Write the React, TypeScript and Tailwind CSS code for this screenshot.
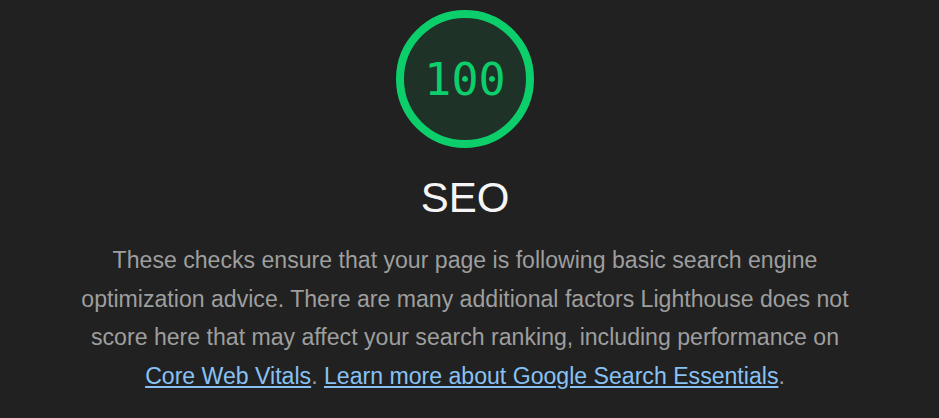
export default function App() {
  return (
    <div className="w-[939px] h-[418px] bg-[#212121] overflow-hidden" style={{ fontFamily: '"Liberation Sans", Arial, sans-serif' }}>
      <div className="w-[930px] flex flex-col items-center pt-[10px]">
        <div className="relative w-[138px] h-[138px]">
          <svg width="138" height="138" viewBox="0 0 138 138" className="absolute inset-0">
            <circle cx="69" cy="69" r="65" fill="#0cce6b" fillOpacity="0.1" stroke="#0cce6b" strokeWidth="8" />
          </svg>
          <div className="absolute inset-0 flex items-center justify-center text-[#0cce6b] text-[45px] leading-none" style={{ fontFamily: '"DejaVu Sans Mono", monospace' }}>
            100
          </div>
        </div>
        <div className="mt-[26px] text-[42px] leading-[48px] text-[#f5f5f5]">SEO</div>
        <p className="mt-[19px] max-w-[788px] text-center text-[23.1px] leading-[38.5px] text-[#9e9e9e]">
          These checks ensure that your page is following basic search engine optimization advice. There are many additional factors Lighthouse does not score here that may affect your search ranking, including performance on{' '}
          <a href="#" className="text-[#88c2f5] underline">Core Web Vitals</a>.{' '}
          <a href="#" className="text-[#88c2f5] underline">Learn more about Google Search Essentials</a>.
        </p>
      </div>
    </div>
  );
}
